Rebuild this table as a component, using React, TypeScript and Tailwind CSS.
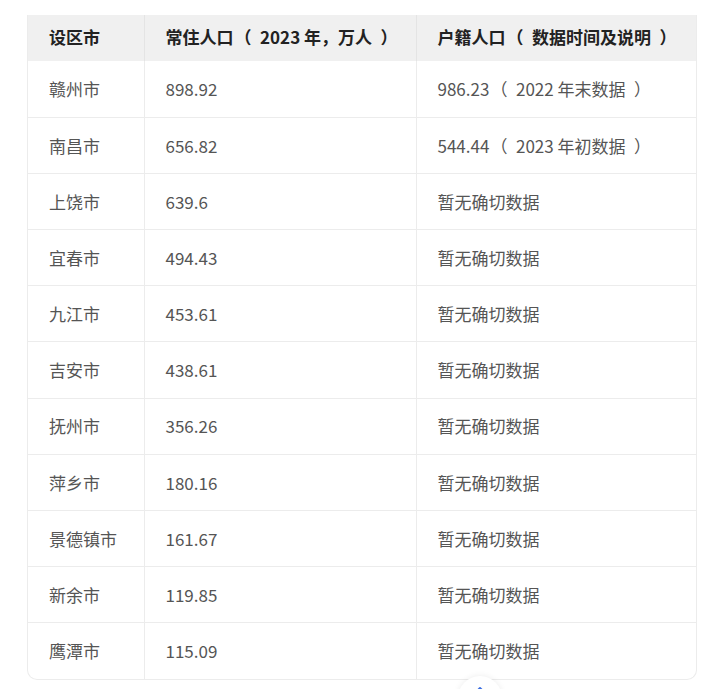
import React from 'react';

// 全角括号两侧留白，贴近参考中的字距
const lp = '\u200A（\u2002';
const rp = '\u2002）\u200A';

const rows: [string, string, string][] = [
  ['赣州市', '898.92', `986.23${lp}2022 年末数据${rp}`],
  ['南昌市', '656.82', `544.44${lp}2023 年初数据${rp}`],
  ['上饶市', '639.6', '暂无确切数据'],
  ['宜春市', '494.43', '暂无确切数据'],
  ['九江市', '453.61', '暂无确切数据'],
  ['吉安市', '438.61', '暂无确切数据'],
  ['抚州市', '356.26', '暂无确切数据'],
  ['萍乡市', '180.16', '暂无确切数据'],
  ['景德镇市', '161.67', '暂无确切数据'],
  ['新余市', '119.85', '暂无确切数据'],
  ['鹰潭市', '115.09', '暂无确切数据'],
];

const App: React.FC = () => {
  return (
    <div
      className="relative w-[718px] h-[689px] overflow-hidden bg-white pt-[15px] pl-[27px]"
      style={{ fontFamily: '"Microsoft YaHei", "Noto Sans CJK SC", sans-serif' }}
    >
      <div className="w-[670px] rounded-b-[10px] border-b border-r border-l border-[#ececec] overflow-hidden">
        <table className="w-full border-collapse table-fixed">
          <colgroup>
            <col className="w-[116px]" />
            <col className="w-[272px]" />
            <col />
          </colgroup>
          <thead>
            <tr className="bg-[#f0f0f0] h-[46px]">
              <th className="text-left font-bold text-[17px] text-[#222] pl-[21px] pb-[3px] border-r border-[#e4e4e4]">设区市</th>
              <th className="text-left font-bold text-[17px] text-[#222] pl-[21px] pb-[3px] border-r border-[#e4e4e4]">常住人口{lp}2023 年，万人{rp}</th>
              <th className="text-left font-bold text-[17px] text-[#222] pl-[21px] pb-[3px]">户籍人口{lp}数据时间及说明{rp}</th>
            </tr>
          </thead>
          <tbody>
            {rows.map((r, i) => (
              <tr key={i} className={`h-[56.2px] ${i > 0 ? 'border-t border-[#ececec]' : ''}`}>
                <td className="pl-[21px] text-[17px] text-[#555] border-r border-[#ececec]">{r[0]}</td>
                <td className="pl-[21px] text-[17px] text-[#555] border-r border-[#ececec]">{r[1]}</td>
                <td className="pl-[21px] text-[17px] text-[#555]">{r[2]}</td>
              </tr>
            ))}
          </tbody>
        </table>
      </div>
      <div className="absolute left-[458px] top-[676px] w-[44px] h-[44px] rounded-full bg-white shadow-[0_0_6px_rgba(0,0,0,0.08)] flex justify-center pt-[10px]">
        <svg width="16" height="10" viewBox="0 0 16 10" fill="none">
          <path d="M2 8 L8 2 L14 8" stroke="#3b6fe0" strokeWidth="2" strokeLinecap="round" strokeLinejoin="round" />
        </svg>
      </div>
    </div>
  );
};

export default App;
